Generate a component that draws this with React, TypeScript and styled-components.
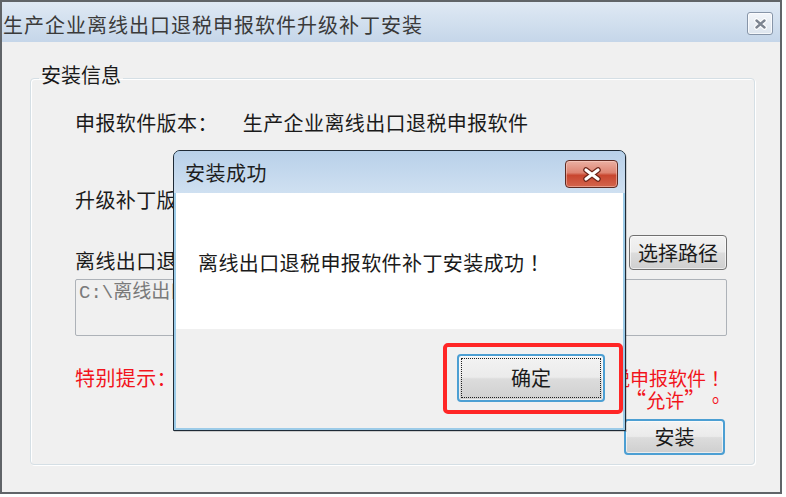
import React from "react";
import styled, { createGlobalStyle } from "styled-components";

const cjk = `"Noto Sans CJK SC", "Noto Sans", sans-serif`;

const Global = createGlobalStyle`
  html, body { margin: 0; padding: 0; background: #ffffff; }
  body { font-family: ${cjk}; }
  * { box-sizing: border-box; }
`;

const Window = styled.div`
  position: relative;
  width: 782px;
  height: 494px;
  border: 2px solid #606468;
  background: #f0f0f0;
  display: flex;
  flex-direction: column;
  font-family: ${cjk};
  color: #1a1a1a;
`;

const TitleBar = styled.div`
  height: 40px;
  flex: none;
  display: flex;
  align-items: center;
  justify-content: space-between;
  padding: 0 7px 0 1px;
  background: linear-gradient(#dfe9f4, #c5d6e9);
`;

const TitleText = styled.span`
  font-size: 20px;
  line-height: 20px;
  letter-spacing: 1px;
  color: #3a3a3a;
  margin-top: 6px;
`;

const SmallClose = styled.div`
  width: 26px;
  height: 23px;
  margin-top: 3px;
  border: 1px solid #8795a8;
  border-radius: 3px;
  background: linear-gradient(#f3f6fa, #dde5ee);
  box-shadow: inset 0 0 0 1px rgba(255, 255, 255, 0.7);
  display: flex;
  align-items: center;
  justify-content: center;
`;

const Body = styled.div`
  flex: 1;
  padding: 23px 25px 0 28px;
`;

const Group = styled.fieldset`
  margin: 0;
  min-width: 0;
  padding: 17px 27px 9px 8px;
  border: 1px solid #d5dfe5;
  border-radius: 4px;
  box-shadow: inset 1px 1px 0 #ffffff, 1px 1px 0 #ffffff;
`;

const Legend = styled.legend`
  padding: 0 2px 6px;
  font-size: 20px;
  line-height: 20px;
  color: #1a1a1a;
`;

const Content = styled.div`
  padding-left: 36px;
  display: flex;
  flex-direction: column;
`;

const Row = styled.div<{ $mt: number; $h?: number }>`
  display: flex;
  align-items: flex-start;
  justify-content: space-between;
  margin-top: ${(p) => p.$mt}px;
  ${(p) => (p.$h ? `height: ${p.$h}px;` : "")}
`;

const Label = styled.span<{ $mt?: number; $gap?: number; $red?: boolean }>`
  font-size: 20px;
  line-height: ${(p) => (p.$red ? 21 : 30)}px;
  letter-spacing: 0.4px;
  white-space: nowrap;
  color: ${(p) => (p.$red ? "#f2141c" : "#1a1a1a")};
  margin-top: ${(p) => p.$mt ?? 0}px;
  margin-right: ${(p) => p.$gap ?? 0}px;
`;

const Punct = styled.span`
  font-family: "Noto Sans CJK TC", "Noto Sans CJK SC", sans-serif;
`;

const Quote = styled.span<{ $side: "open" | "close" }>`
  display: inline-block;
  width: 1em;
  text-align: ${(p) => (p.$side === "open" ? "right" : "left")};
  font-family: "Noto Sans CJK TC", "Noto Sans CJK SC", sans-serif;
  font-size: 1.15em;
  line-height: 1;
`;

const InfoLine = styled.div`
  display: flex;
  align-items: flex-start;
`;

const PathBox = styled.div`
  margin-top: 7px;
  height: 57px;
  border: 1px solid #adb2b8;
  border-radius: 2px;
  background: #f0f0f0;
  padding: 1px 3px;
  font-family: "Liberation Mono", "Noto Sans CJK SC", monospace;
  font-size: 19px;
  line-height: 24px;
  color: #7a7a7a;
  white-space: nowrap;
  overflow: hidden;
`;

const Note = styled.div`
  flex: 1;
  text-align: right;
  padding-right: 2px;
  font-size: 19px;
  line-height: 21px;
  color: #f2141c;
  white-space: nowrap;
`;

const NoteLine = styled.div`
  height: 21px;
`;

const Button = styled.button<{ $w: number; $h: number; $default?: boolean; $focus?: boolean }>`
  width: ${(p) => p.$w}px;
  height: ${(p) => p.$h}px;
  flex: none;
  padding: 0;
  font-family: ${cjk};
  font-size: 20px;
  line-height: 20px;
  color: #1a1a1a;
  border-radius: 4px;
  border: ${(p) => (p.$default ? "2px solid #4c9fd3" : "1px solid #707070")};
  background: linear-gradient(#f3f3f3 0%, #ebebeb 48%, #dcdcdc 52%, #cfcfcf 100%);
  box-shadow: inset 0 0 0 1px rgba(255, 255, 255, 0.6);
  ${(p) => (p.$focus ? "outline: 1px dotted #202020; outline-offset: -5px;" : "")}
`;

const InstallRow = styled.div`
  margin-top: 10px;
  display: flex;
  justify-content: flex-end;
  padding-right: 2px;
`;

/* ---- modal dialog ---- */

const Dialog = styled.div`
  position: absolute;
  left: 171px;
  top: 148px;
  width: 453px;
  height: 281px;
  border: 1px solid #1e2a36;
  border-radius: 7px 7px 0 0;
  background: #9ccbe8;
  padding: 0 2px 2px 2px;
  display: flex;
  flex-direction: column;
  box-shadow: 1px 1px 0 rgba(0, 0, 0, 0.15);
`;

const DialogTitle = styled.div`
  height: 42px;
  flex: none;
  margin: 0 -2px;
  padding: 0 7px 0 11px;
  border-radius: 6px 6px 0 0;
  background: linear-gradient(#b8d0e9, #cfe0f1);
  display: flex;
  align-items: center;
  justify-content: space-between;
`;

const DialogTitleText = styled.span`
  font-size: 20px;
  line-height: 20px;
  color: #1e1e1e;
  letter-spacing: 0.5px;
  margin-top: 2px;
`;

const RedClose = styled.div`
  width: 53px;
  height: 28px;
  margin-top: 4px;
  border: 1px solid #5e2a22;
  border-radius: 4px;
  background: linear-gradient(#eab0a3 0%, #de8472 45%, #c8462f 55%, #d3654d 100%);
  box-shadow: inset 0 0 0 1px rgba(255, 220, 210, 0.45);
  display: flex;
  align-items: center;
  justify-content: center;
`;

const DialogBody = styled.div`
  height: 136px;
  flex: none;
  background: #ffffff;
  display: flex;
  align-items: center;
  padding: 2px 0 0 22px;
  font-size: 20px;
  letter-spacing: 0.4px;
  color: #1a1a1a;
`;

const DialogFooter = styled.div`
  flex: 1;
  background: #f0f0f0;
  display: flex;
  align-items: center;
  justify-content: flex-end;
`;

const Highlight = styled.div`
  border: 4px solid #ff2626;
  border-radius: 5px;
  padding: 7px 14px 8px 10px;
  display: flex;
`;

export default function App() {
  return (
    <>
      <Global />
      <Window>
        <TitleBar>
          <TitleText>生产企业离线出口退税申报软件升级补丁安装</TitleText>
          <SmallClose>
            <svg width="13" height="12" viewBox="0 0 13 12">
              <path d="M2.5 2.5 L10.5 9.5 M10.5 2.5 L2.5 9.5" stroke="#ffffff" strokeWidth="4.5" strokeLinecap="round" />
              <path d="M2.5 2.5 L10.5 9.5 M10.5 2.5 L2.5 9.5" stroke="#7d8591" strokeWidth="2.4" strokeLinecap="round" />
            </svg>
          </SmallClose>
        </TitleBar>
        <Body>
          <Group>
            <Legend>安装信息</Legend>
            <Content>
              <Row $mt={0} $h={30}>
                <InfoLine>
                  <Label $gap={25}>申报软件版本：</Label>
                  <Label>生产企业离线出口退税申报软件</Label>
                </InfoLine>
              </Row>
              <Row $mt={47} $h={30}>
                <InfoLine>
                  <Label $gap={25}>升级补丁版本：</Label>
                  <Label>V3.0.20</Label>
                </InfoLine>
              </Row>
              <Row $mt={20} $h={37}>
                <Label $mt={11}>离线出口退税申报软件安装路径：</Label>
                <Button $w={98} $h={35}>选择路径</Button>
              </Row>
              <PathBox>C:\离线出口退税申报软件</PathBox>
              <Row $mt={31}>
                <Label $red>特别提示：</Label>
                <Note>
                  <NoteLine>
                    安装前请先关闭离线出口退税申报软件<Punct>！</Punct>
                  </NoteLine>
                  <NoteLine>
                    如有杀毒软件提示，请选择<Quote $side="open">“</Quote>允许<Quote $side="close">”</Quote>
                    <Punct>。</Punct>
                  </NoteLine>
                </Note>
              </Row>
              <InstallRow>
                <Button $w={101} $h={36} $default>安装</Button>
              </InstallRow>
            </Content>
          </Group>
        </Body>

        <Dialog>
          <DialogTitle>
            <DialogTitleText>安装成功</DialogTitleText>
            <RedClose>
              <svg width="20" height="15" viewBox="0 0 20 15">
                <path d="M4 3 L16 12 M16 3 L4 12" stroke="#6b2418" strokeWidth="5.5" strokeLinecap="round" />
                <path d="M4 3 L16 12 M16 3 L4 12" stroke="#ffffff" strokeWidth="3.2" strokeLinecap="round" />
              </svg>
            </RedClose>
          </DialogTitle>
          <DialogBody>
            离线出口退税申报软件补丁安装成功<Punct>！</Punct>
          </DialogBody>
          <DialogFooter>
            <Highlight>
              <Button $w={148} $h={48} $default $focus>确定</Button>
            </Highlight>
          </DialogFooter>
        </Dialog>
      </Window>
    </>
  );
}
